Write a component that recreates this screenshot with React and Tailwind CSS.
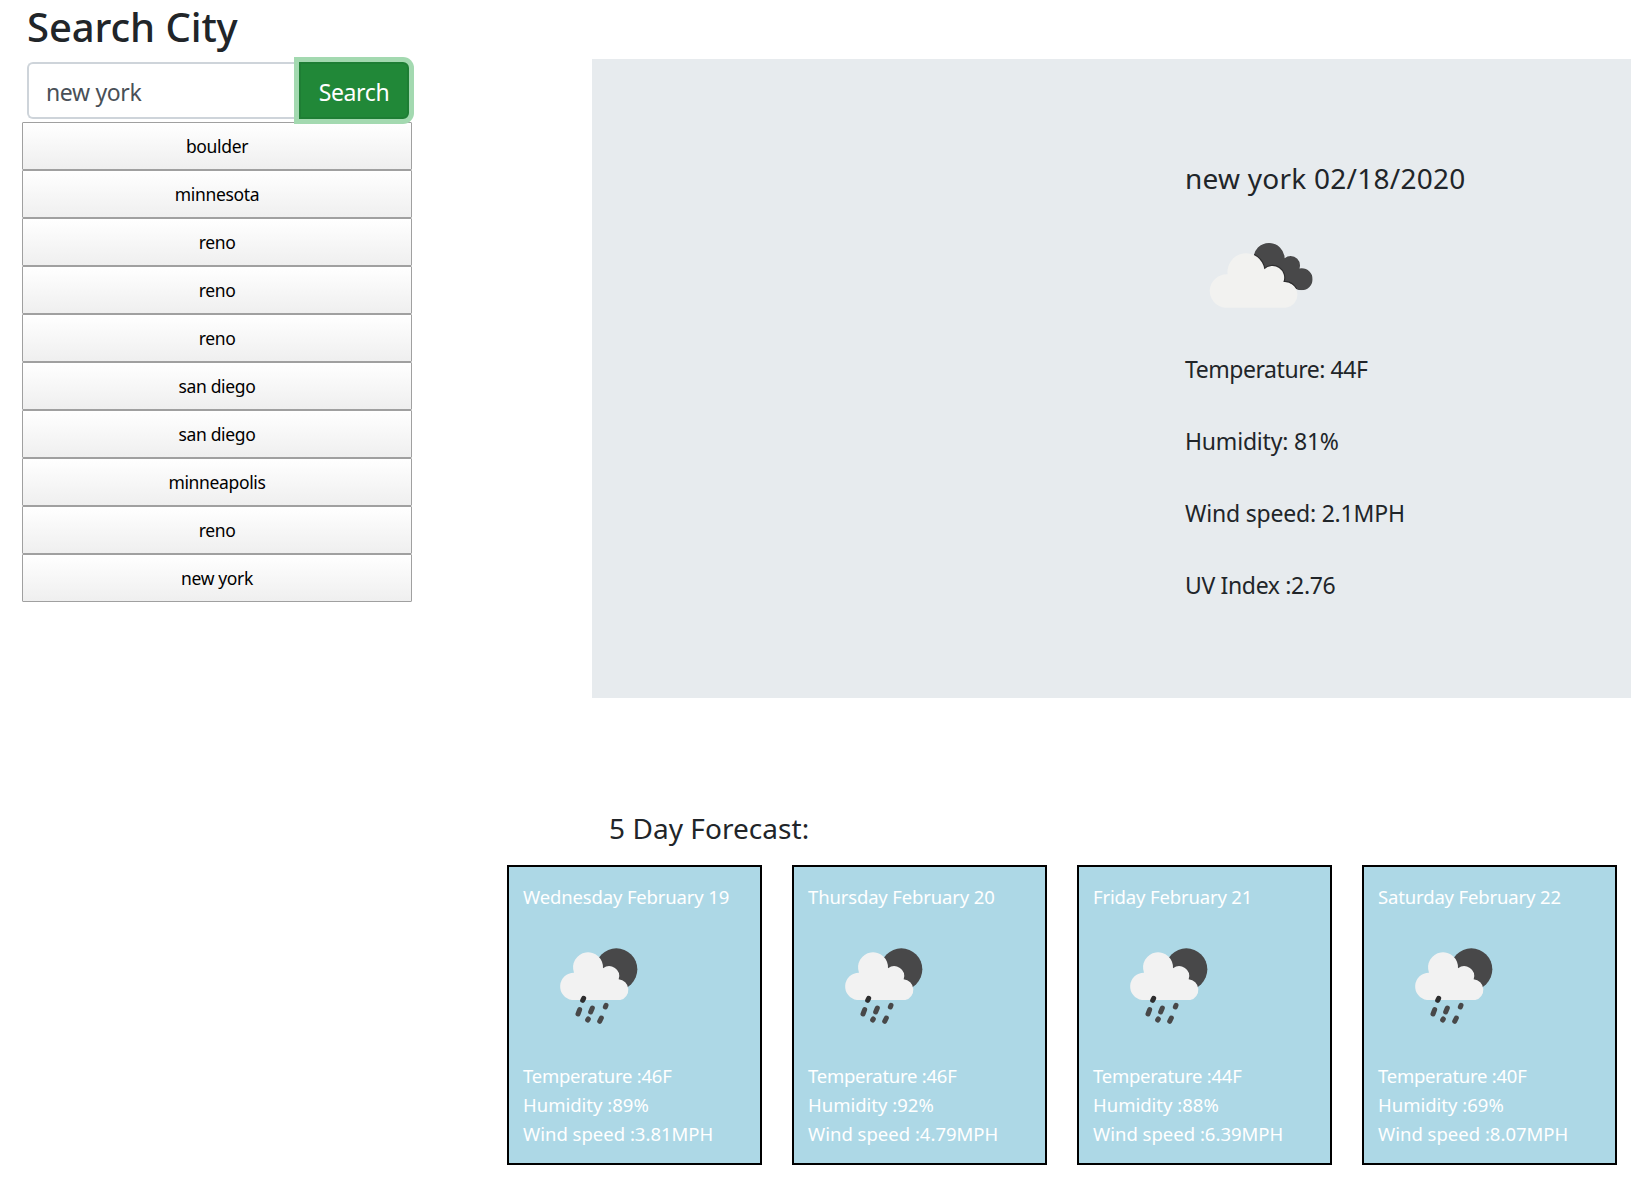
const cities = ["boulder", "minnesota", "reno", "reno", "reno", "san diego", "san diego", "minneapolis", "reno", "new york"];

const days = [
  { date: "Wednesday February 19", temp: "46F", humidity: "89%", wind: "3.81MPH" },
  { date: "Thursday February 20", temp: "46F", humidity: "92%", wind: "4.79MPH" },
  { date: "Friday February 21", temp: "44F", humidity: "88%", wind: "6.39MPH" },
  { date: "Saturday February 22", temp: "40F", humidity: "69%", wind: "8.07MPH" },
];

function BrokenClouds() {
  const cloud = "M166 503 A50 50 0 1 1 173 403 A55 55 0 1 1 283 388 A35 35 0 0 1 340 426 A38 38 0 0 1 347 503 Z";
  return (
    <svg className="mt-10 ml-[22px] block h-[70px] w-[108px]" viewBox="111 300 324 210">
      <clipPath id="dark-clouds">
        <circle cx="297" cy="356" r="47" />
        <circle cx="362" cy="376" r="28" />
        <circle cx="395" cy="418" r="33" />
        <path d="M297 380 L340 352 L380 390 L385 440 L340 425 Z" />
      </clipPath>
      <g clipPath="url(#dark-clouds)">
        <rect x="200" y="300" width="240" height="200" fill="#484849" />
        <path d={cloud} fill="none" stroke="#2e2e2f" strokeWidth="7" />
      </g>
      <path d={cloud} fill="#f2f2f0" />
    </svg>
  );
}

function RainCloud() {
  return (
    <svg className="mt-9 ml-[35px] block h-[78px] w-[81px]" viewBox="54 54 243 234">
      <circle cx="229" cy="121" r="63" fill="#484849" />
      <path
        d="M97 213 A41.2 41.2 0 0 1 103 131 A45 45 0 1 1 190 118 A30 30 0 0 1 237 151 A31.5 31.5 0 0 1 242 213 Z"
        fill="#f2f2f2"
        transform="translate(-1 0)"
      />
      <g stroke="#484849" strokeWidth="15" strokeLinecap="round">
        <path d="M131 208 L128 214" stroke="#2e2e2f" />
        <path d="M119 242 L114 255" />
        <path d="M157 237 L152 249" />
        <path d="M198 229 L196 234" />
        <path d="M145 270 L143 273" />
        <path d="M184 267 L179 277" />
      </g>
    </svg>
  );
}

export default function App() {
  return (
    <div className="flex h-[1178px] w-[1631px] overflow-hidden bg-white font-['Noto_Sans',sans-serif] text-[#212529]">
      <aside className="w-[507px] shrink-0 pt-px pl-[22px]">
        <h1 className="ml-[5px] h-[61px] text-[40px] leading-[51px] font-medium tracking-[-0.1px]">Search City</h1>
        <div className="ml-[5px] flex h-[57px] w-[382px] text-[23px] leading-[54px] tracking-[-0.35px]">
          <div className="flex-1 rounded-l-md border-2 border-r-0 border-[#ced4da] pt-px pl-[17px] text-[#495057]">new york</div>
          <button className="relative w-[110px] rounded-r-md border-2 border-[#1e7e34] bg-[#218838] pt-px text-white shadow-[0_0_0_5px_#a3d9b0]">Search</button>
        </div>
        <ul className="mt-[3px] w-[390px]">
          {cities.map((c, i) => (
            <li key={i} className="h-12 rounded-[1px] border border-[#a0a0a0] bg-linear-to-b from-white to-[#efefef] text-center text-[17.5px] leading-[46px] tracking-[-0.35px] text-black">{c}</li>
          ))}
        </ul>
      </aside>
      <main className="flex-1 pt-[59px]">
        <section className="ml-[85px] h-[639px] bg-[#e7ebee] pt-[98px] pl-[593px]">
          <h2 className="text-[28px] leading-[43px] tracking-[0.25px]">new york 02/18/2020</h2>
          <BrokenClouds />
          <div className="mt-[41px] flex flex-col gap-9 text-[23px] leading-9">
            <p className="tracking-[-0.45px]">Temperature: 44F</p>
            <p className="tracking-[-0.2px]">Humidity: 81%</p>
            <p className="tracking-[-0.2px]">Wind speed: 2.1MPH</p>
            <p className="tracking-[-0.35px]">UV Index :2.76</p>
          </div>
        </section>
        <h2 className="mt-[109px] ml-[102px] text-[28px] leading-[43px] tracking-[0.05px]">5 Day Forecast:</h2>
        <div className="mt-[15px] flex gap-[30px]">
          {days.map((x) => (
            <article key={x.date} className="h-[300px] w-[255px] shrink-0 border-2 border-black bg-[#add8e6] pt-[15px] pl-[14px] text-[18.5px] leading-[29px] text-white">
              <p className="tracking-[-0.15px]">{x.date}</p>
              <RainCloud />
              <div className="mt-9">
                <p className="tracking-[-0.25px]">Temperature :{x.temp}</p>
                <p>Humidity :{x.humidity}</p>
                <p>Wind speed :{x.wind}</p>
              </div>
            </article>
          ))}
        </div>
      </main>
    </div>
  );
}
